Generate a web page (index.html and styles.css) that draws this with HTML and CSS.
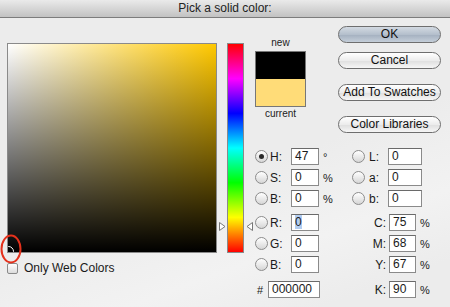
FILE: index.html
```
<!DOCTYPE html>
<html lang="en">
<head>
  <meta charset="UTF-8" />
  <title>Pick a solid color</title>
  <link rel="stylesheet" href="styles.css">
</head>
<body>
  <div class="dialog">
    <div class="titlebar">Pick a solid color:</div>

    <div class="content">
      <div class="picker">
        <div class="field"><span class="marker"></span></div>
        <label class="webonly"><span class="check"></span>Only Web Colors</label>
      </div>

      <div class="hue">
        <svg class="arrow arrow-left" width="7" height="9" viewBox="0 0 7 9"><path d="M0.5 0.5 L6 4.5 L0.5 8.5 Z" fill="#fff" stroke="#777"/></svg>
        <svg class="arrow arrow-right" width="7" height="9" viewBox="0 0 7 9"><path d="M6.5 0.5 L1 4.5 L6.5 8.5 Z" fill="#fff" stroke="#777"/></svg>
      </div>

      <div class="side">
        <div class="top">
          <div class="swatch">
            <div class="swatch-label">new</div>
            <div class="swatch-box">
              <div class="swatch-new"></div>
              <div class="swatch-current"></div>
            </div>
            <div class="swatch-label">current</div>
          </div>
          <div class="buttons">
            <button class="btn btn-default">OK</button>
            <button class="btn btn-cancel">Cancel</button>
            <button class="btn btn-spaced">Add To Swatches</button>
            <button class="btn btn-spaced">Color Libraries</button>
          </div>
        </div>

        <div class="values">
          <div class="cell"><span class="radio checked"></span><span class="lbl">H:</span><span class="input">47</span><span class="unit">°</span></div>
          <div class="cell"><span class="radio"></span><span class="lbl lbl-short">L:</span><span class="input input-wide">0</span></div>

          <div class="cell"><span class="radio"></span><span class="lbl">S:</span><span class="input">0</span><span class="unit">%</span></div>
          <div class="cell"><span class="radio"></span><span class="lbl lbl-short">a:</span><span class="input input-wide">0</span></div>

          <div class="cell"><span class="radio"></span><span class="lbl">B:</span><span class="input">0</span><span class="unit">%</span></div>
          <div class="cell"><span class="radio"></span><span class="lbl lbl-short">b:</span><span class="input input-wide">0</span></div>

          <div class="cell group"><span class="radio"></span><span class="lbl">R:</span><span class="input"><span class="selected">0</span></span></div>
          <div class="cell group"><span class="lbl lbl-cmyk">C:</span><span class="input input-cmyk">75</span><span class="unit">%</span></div>

          <div class="cell"><span class="radio"></span><span class="lbl">G:</span><span class="input">0</span></div>
          <div class="cell"><span class="lbl lbl-cmyk">M:</span><span class="input input-cmyk">68</span><span class="unit">%</span></div>

          <div class="cell"><span class="radio"></span><span class="lbl">B:</span><span class="input">0</span></div>
          <div class="cell"><span class="lbl lbl-cmyk">Y:</span><span class="input input-cmyk">67</span><span class="unit">%</span></div>

          <div class="cell hexrow"><span class="hash">#</span><span class="input input-hex">000000</span></div>
          <div class="cell hexrow"><span class="lbl lbl-cmyk">K:</span><span class="input input-cmyk">90</span><span class="unit">%</span></div>
        </div>
      </div>
    </div>

    <svg class="callout" width="24" height="32" viewBox="0 0 24 32"><ellipse cx="11" cy="16" rx="9.5" ry="13.5" fill="none" stroke="#e4311c" stroke-width="2"/></svg>
  </div>
</body>
</html>
```

FILE: styles.css
```
body {
  margin: 0;
  padding: 0;
  background-color: #ececec;
  font-family: "Liberation Sans", Arial, sans-serif;
  color: #1a1a1a;
}

.dialog {
  position: relative;
  width: 450px;
  height: 307px;
  overflow: hidden;
  background: linear-gradient(160deg, #ececec 55%, #f2f2f2 75%, #ececec 90%);
}

.titlebar {
  height: 17px;
  line-height: 17px;
  text-align: center;
  font-size: 12px;
  color: #222;
  background: linear-gradient(#eaeaea, #c2c2c2);
  border-bottom: 1px solid #7c7c7c;
}

.content {
  display: flex;
  padding-left: 7px;
}

/* color field */
.picker {
  margin-top: 25px;
  width: 210px;
}

.field {
  position: relative;
  width: 208px;
  height: 208px;
  border: 1px solid #8a8a8a;
  overflow: hidden;
  background:
    linear-gradient(to top, #000, rgba(0,0,0,0)),
    linear-gradient(to right, #fff, #ffc800);
}

.marker {
  position: absolute;
  left: -5px;
  bottom: -5px;
  width: 9px;
  height: 9px;
  border: 1px solid #fff;
  border-radius: 50%;
}

.webonly {
  display: flex;
  align-items: center;
  margin-top: 9px;
  font-size: 12px;
  line-height: 12px;
}

.check {
  width: 9px;
  height: 9px;
  margin-right: 6px;
  border: 1px solid #8a8a8a;
  border-radius: 2px;
  background: linear-gradient(#fff, #dcdcdc);
}

/* hue slider */
.hue {
  position: relative;
  margin-top: 25px;
  margin-left: 10px;
  width: 15px;
  height: 208px;
  border: 1px solid #8a8a8a;
  background: linear-gradient(to bottom, #f00 0%, #f0f 16.67%, #00f 33.33%, #0ff 50%, #0f0 66.67%, #ff0 83.33%, #f00 100%);
}

.arrow {
  position: absolute;
  top: 178px;
}

.arrow-left {
  left: -9px;
}

.arrow-right {
  right: -10px;
}

/* right side */
.side {
  flex: 1;
  padding-top: 8px;
  margin-left: 10px;
}

.top {
  display: flex;
}

.swatch {
  margin-top: 11px;
  margin-left: 1px;
  width: 51px;
}

.swatch-label {
  text-align: center;
  font-size: 10px;
  line-height: 12px;
  color: #222;
}

.swatch-box {
  width: 49px;
  margin: 2px 0 1px;
  border: 1px solid #777;
}

.swatch-new {
  height: 27px;
  background-color: #000;
}

.swatch-current {
  height: 27px;
  background-color: #ffdc78;
}

.buttons {
  margin-left: auto;
  margin-right: 9px;
  display: flex;
  flex-direction: column;
}

.btn {
  width: 103px;
  height: 17px;
  padding: 0;
  border: 1px solid #6e6e6e;
  border-radius: 9px;
  background: linear-gradient(#ffffff, #ececec 50%, #e0e0e0 55%, #f6f6f6);
  font-family: "Liberation Sans", Arial, sans-serif;
  font-size: 12px;
  line-height: 15px;
  color: #111;
}

.btn-default {
  background: linear-gradient(#d3dae2, #b4bfcc 50%, #a6b2c1 55%, #c4ced9);
}

.btn-cancel {
  margin-top: 9px;
}

.btn-spaced {
  margin-top: 15px;
}

/* numeric fields */
.values {
  display: grid;
  grid-template-columns: 97px auto;
  row-gap: 4px;
  margin-top: 15px;
  margin-left: 1px;
  font-size: 12px;
}

.cell {
  display: flex;
  align-items: center;
  height: 17px;
}

.group {
  margin-top: 3px;
}

.hexrow {
  margin-top: 4px;
}

.radio {
  position: relative;
  box-sizing: border-box;
  width: 13px;
  height: 13px;
  border: 1px solid #8c8c8c;
  border-radius: 50%;
  background: linear-gradient(#ffffff, #d6d6d6);
}

.radio.checked::after {
  content: "";
  position: absolute;
  left: 3px;
  top: 3px;
  width: 5px;
  height: 5px;
  border-radius: 50%;
  background-color: #2a2a2a;
}

.lbl {
  width: 21px;
  margin-left: 2px;
}

.lbl-short {
  width: 19px;
  margin-left: 4px;
}

.lbl-cmyk {
  width: 34px;
  margin-left: 0;
  margin-right: 3px;
  text-align: right;
}

.input {
  box-sizing: border-box;
  width: 28px;
  height: 17px;
  padding-left: 3px;
  line-height: 15px;
  border: 1px solid #8a8a8a;
  border-top-color: #6a6a6a;
  background-color: #fff;
}

.input-wide {
  width: 34px;
}

.input-cmyk {
  width: 27px;
}

.input-hex {
  width: 52px;
}

.selected {
  background-color: #b2cdf0;
}

.unit {
  margin-left: 4px;
  font-size: 11px;
}

.hash {
  width: 11px;
  margin-left: 2px;
  font-size: 11px;
}

.callout {
  position: absolute;
  left: 0;
  top: 233px;
}
```
